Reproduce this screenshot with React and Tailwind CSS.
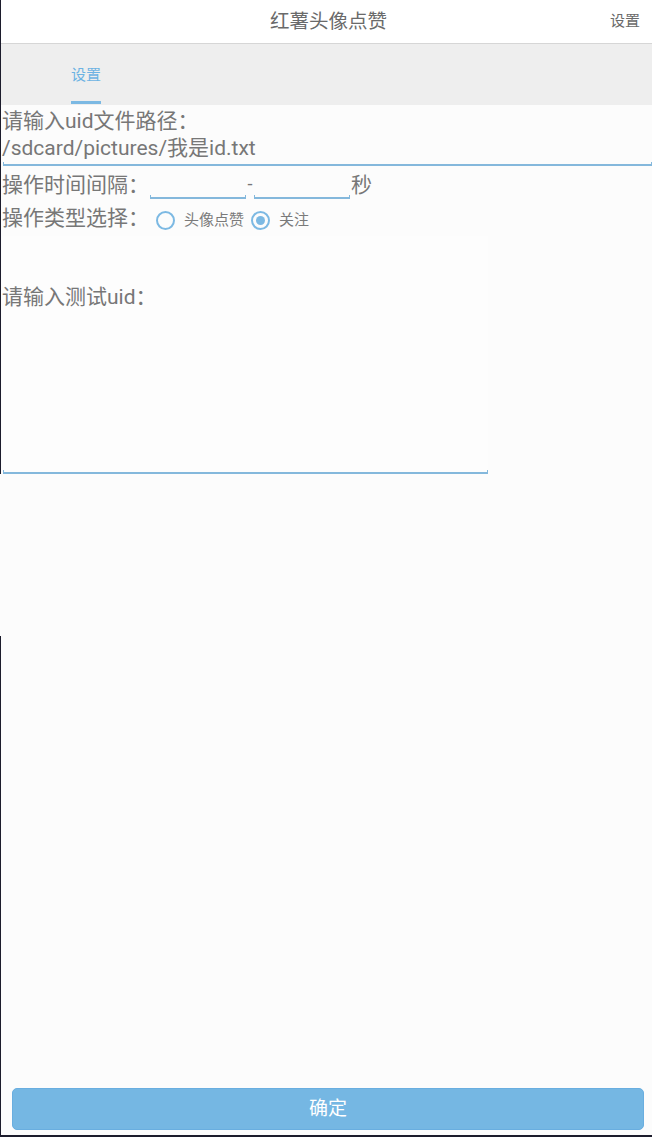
import React from "react"

const font = "font-['Roboto','Noto_Sans_CJK_SC',sans-serif]"

function Underline({ className = "" }) {
  return <div className={`h-[4px] border-x border-b-2 border-[#84b8dc] ${className}`}></div>
}

function Radio({ checked, label }) {
  return (
    <div className="flex items-center">
      <div className="w-[19px] h-[19px] rounded-full border-2 border-[#7cb9e3] flex items-center justify-center">
        {checked && <div className="w-[9px] h-[9px] rounded-full bg-[#7cb9e3]"></div>}
      </div>
      <span className="ml-[9px] text-[15px] leading-[20px] text-[#7a7a7a]">{label}</span>
    </div>
  )
}

export default function App() {
  return (
    <div className={`w-[652px] h-[1137px] flex flex-col bg-[#fcfcfc] text-[#777777] ${font}`}>
      {/* top part */}
      <div className="border-l border-[#1c1c2c]">
        {/* header */}
        <div className="h-[44px] bg-white border-b border-[#d6d6d6] grid grid-cols-[1fr_auto_1fr] items-center">
          <div></div>
          <div className="text-[19.5px] text-[#6a6a6a] pl-[4px]">红薯头像点赞</div>
          <div className="text-[15px] text-[#6a6a6a] text-right pr-[12px]">设置</div>
        </div>

        {/* tab bar */}
        <div className="h-[61px] bg-[#eeeeee] pl-[70px] flex">
          <div className="flex flex-col items-center justify-between pt-[20px] pb-[1px]">
            <span className="text-[15px] leading-[22px] text-[#6db3e3]">设置</span>
            <div className="w-[30px] h-[3px] bg-[#7cb9e3]"></div>
          </div>
        </div>

        {/* form */}
        <div className="pl-[1px] text-[21px]">
          <div className="leading-[28px] pt-[2px]">请输入uid文件路径：</div>
          <div className="leading-[27px]">/sdcard/pictures/我是id.txt</div>
          <Underline className="ml-[1px]" />

          <div className="h-[34px] flex items-end">
            <div className="self-center leading-[28px] pt-[4px]">操作时间间隔：</div>
            <Underline className="w-[96px] ml-[1px] mb-[1px]" />
            <div className="self-center text-[18px] leading-[24px] w-[8px] text-center pt-[2px]">-</div>
            <Underline className="w-[96px] mb-[1px]" />
            <div className="self-center leading-[28px] ml-[1px] pt-[4px]">秒</div>
          </div>

          <div className="h-[36px] flex items-center">
            <div className="leading-[28px] pb-[1px]">操作类型选择：</div>
            <div className="flex items-center gap-[7px] ml-[7px] pt-[4px]">
              <Radio label="头像点赞" />
              <Radio checked label="关注" />
            </div>
          </div>

          {/* test uid textarea */}
          <div className="w-[486px] h-[238px] flex flex-col bg-[#fdfdfd]">
            <div className="leading-[28px] pt-[47px]">请输入测试uid：</div>
            <div className="flex-1"></div>
            <Underline className="ml-[1px]" />
          </div>
        </div>
      </div>

      <div className="h-[162px]"></div>

      {/* bottom part */}
      <div className="flex-1 flex flex-col justify-end border-l border-b-2 border-[#1c1c2c] pl-[11px] pr-[8px] pb-[5px]">
        <button className="h-[42px] w-full rounded-[5px] bg-[#75b7e3] border border-[#69aee0] text-white text-[19px]">
          确定
        </button>
      </div>
    </div>
  )
}
